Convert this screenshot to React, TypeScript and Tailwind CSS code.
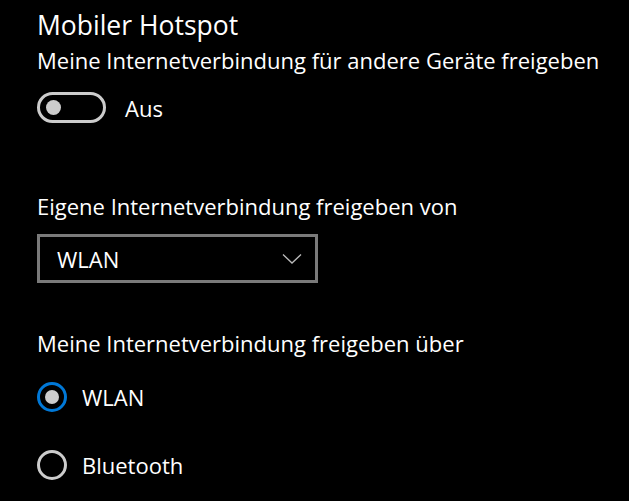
export default function App() {
  return (
    <div
      className="w-[629px] h-[501px] bg-black text-white overflow-hidden"
      style={{ fontFamily: '"Open Sans", "Noto Sans", sans-serif' }}
    >
      <div className="flex flex-col pl-[37px] pt-[8px]">
        <h1 className="text-[26.5px] leading-[34px] font-normal">Mobiler Hotspot</h1>
        <p className="mt-[4px] text-[22px] leading-[28px] text-white">
          Meine Internetverbindung für andere Geräte freigeben
        </p>

        <div className="mt-[18px] flex items-center h-[31px]">
          <div className="w-[69px] h-[31px] rounded-full border-[3px] border-[#cccccc] flex items-center pl-[6px]">
            <div className="w-[15px] h-[15px] rounded-full bg-[#cccccc]" />
          </div>
          <span className="ml-[19px] text-[22px] leading-[28px]">Aus</span>
        </div>

        <p className="mt-[69px] text-[22px] leading-[28px]">Eigene Internetverbindung freigeben von</p>

        <div className="mt-[14px] w-[281px] h-[49px] border-[3px] border-[#7a7a7a] flex items-center justify-between pl-[17px] pr-[13px]">
          <span className="text-[22px] leading-[28px]">WLAN</span>
          <svg width="20" height="12" viewBox="0 0 20 12">
            <polyline points="1,1.5 10,10 19,1.5" fill="none" stroke="#bbbbbb" strokeWidth="1.3" />
          </svg>
        </div>

        <p className="mt-[46px] text-[22px] leading-[28px]">Meine Internetverbindung freigeben über</p>

        <div className="mt-[25px] flex items-center h-[30px]">
          <div className="w-[30px] h-[30px] rounded-full border-[3px] border-[#0078d7] flex items-center justify-center">
            <div className="w-[14px] h-[14px] rounded-full bg-[#cccccc]" />
          </div>
          <span className="ml-[15px] text-[22px] leading-[28px]">WLAN</span>
        </div>

        <div className="mt-[38px] flex items-center h-[30px]">
          <div className="w-[30px] h-[30px] rounded-full border-[3px] border-[#cccccc]" />
          <span className="ml-[15px] text-[22px] leading-[28px]">Bluetooth</span>
        </div>
      </div>
    </div>
  );
}
